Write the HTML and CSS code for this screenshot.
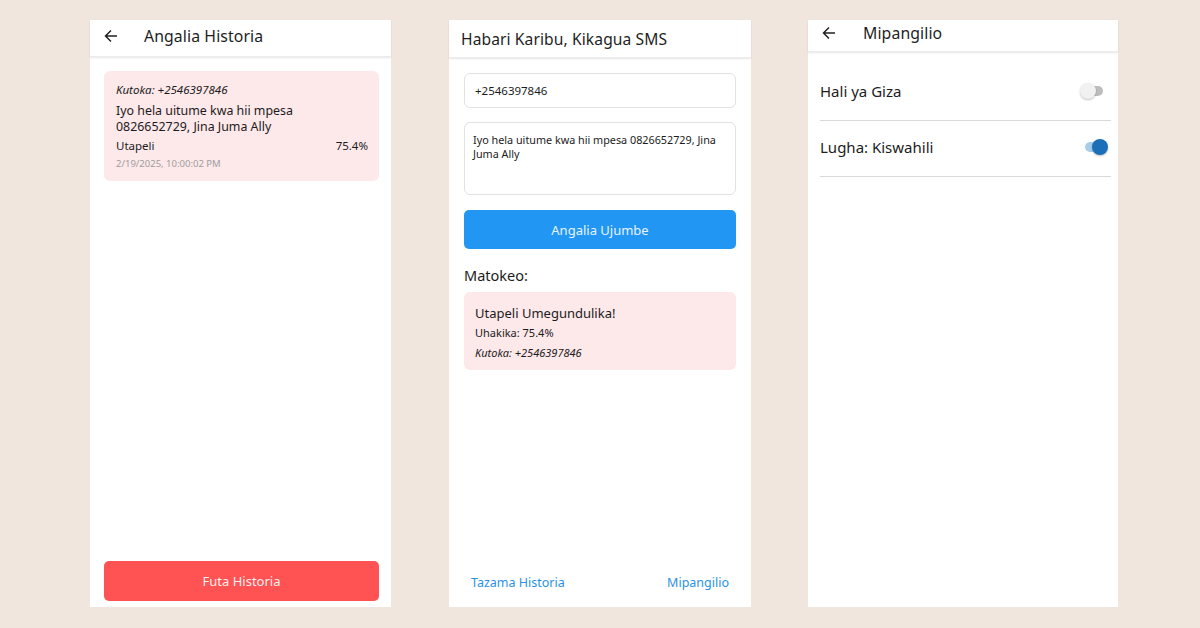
FILE: index.html
```html
<!DOCTYPE html>
<html lang="sw">
<head>
<meta charset="utf-8">
<link rel="stylesheet" href="styles.css">
</head>
<body>
<div class="stage">
  <section class="screen screen-history">
    <header class="bar bar-history">
      <svg class="back" width="14" height="14" viewBox="0 0 14 14"><path d="M13 7H1.8M7 1.5L1.5 7 7 12.5" fill="none" stroke="#222" stroke-width="1.5"/></svg>
      <h1 class="bar-title">Angalia Historia</h1>
    </header>
    <div class="history-body">
      <div class="card">
        <div class="from">Kutoka: +2546397846</div>
        <div class="msg">Iyo hela uitume kwa hii mpesa 0826652729, Jina Juma Ally</div>
        <div class="meta"><span>Utapeli</span><span>75.4%</span></div>
        <div class="date">2/19/2025, 10:00:02 PM</div>
      </div>
      <button class="btn btn-red">Futa Historia</button>
    </div>
  </section>

  <section class="screen screen-main">
    <header class="bar bar-main">
      <h1 class="bar-title main-title">Habari Karibu, Kikagua SMS</h1>
    </header>
    <div class="main-body">
      <div class="field field-input">+2546397846</div>
      <div class="field field-area">Iyo hela uitume kwa hii mpesa 0826652729, Jina Juma Ally</div>
      <button class="btn btn-blue">Angalia Ujumbe</button>
      <div class="result-label">Matokeo:</div>
      <div class="result">
        <div class="result-title">Utapeli Umegundulika!</div>
        <div class="result-line">Uhakika: 75.4%</div>
        <div class="result-line result-from">Kutoka: +2546397846</div>
      </div>
      <nav class="links"><span>Tazama Historia</span><span>Mipangilio</span></nav>
    </div>
  </section>

  <section class="screen screen-settings">
    <header class="bar bar-settings">
      <svg class="back" width="14" height="14" viewBox="0 0 14 14"><path d="M13 7H1.8M7 1.5L1.5 7 7 12.5" fill="none" stroke="#222" stroke-width="1.5"/></svg>
      <h1 class="bar-title">Mipangilio</h1>
    </header>
    <div class="settings-body">
      <div class="row">
        <span>Hali ya Giza</span>
        <span class="switch switch-off"><span class="track"></span><span class="thumb"></span></span>
      </div>
      <div class="row">
        <span>Lugha: Kiswahili</span>
        <span class="switch switch-on"><span class="track"></span><span class="thumb"></span></span>
      </div>
    </div>
  </section>
</div>
</body>
</html>
```

FILE: styles.css
```css
* { box-sizing: border-box; margin: 0; padding: 0; }
html, body { width: 1200px; height: 628px; overflow: hidden; }
body {
  background: #f0e6de;
  font-family: "Noto Sans", "Open Sans", sans-serif;
  color: #1c1c1c;
}
.stage {
  display: flex;
  padding: 20px 0 0 90px;
  gap: 57px;
  height: 607px;
}
.screen {
  background: #fff;
  height: 587px;
  display: flex;
  flex-direction: column;
}
.screen-history { width: 301px; }
.screen-main { width: 302px; margin-left: 1px; }
.screen-settings { width: 310px; }

.bar {
  display: flex;
  align-items: center;
  box-shadow: 0 1px 2px rgba(0,0,0,0.10);
  border-bottom: 1px solid #ececec;
  flex-shrink: 0;
}
.bar-history { height: 37px; padding-left: 14px; padding-bottom: 4px; }
.bar-main { height: 38px; padding-left: 12px; }
.bar-settings { height: 32px; padding-left: 14px; padding-bottom: 6px; }
.back { display: block; margin-right: 26px; }
.bar-settings .back { margin-right: 27px; }
.bar-title { font-size: 15.8px; font-weight: 400; letter-spacing: 0.1px; color: #1e1e1e; line-height: 20px; }
.main-title { font-size: 15.6px; }

.history-body {
  flex: 1;
  display: flex;
  flex-direction: column;
  justify-content: space-between;
  padding: 14px 12px 6px 14px;
}
.card {
  background: #fde8ea;
  border-radius: 6px;
  padding: 11px 11px 10px 12px;
  height: 110px;
}
.from { font-size: 11.5px; font-style: italic; line-height: 15px; margin-bottom: 6px; }
.msg { font-size: 12.4px; line-height: 16px; }
.meta { display: flex; justify-content: space-between; font-size: 11.5px; line-height: 15px; margin-top: 3px; }
.date { font-size: 9.5px; color: #9e9e9e; line-height: 14px; margin-top: 4px; }

.btn {
  border: none;
  font-family: inherit;
  color: #fff;
  border-radius: 5px;
  display: flex;
  align-items: center;
  justify-content: center;
}
.btn-red { background: #ff5252; height: 40px; font-size: 13px; color: #fdeeee; }
.btn-blue { background: #2196f3; height: 39px; font-size: 13px; color: #e8f3fd; margin-top: 15px; }

.main-body {
  flex: 1;
  display: flex;
  flex-direction: column;
  padding: 15px 15px 15px 15px;
}
.field {
  border: 1px solid #e2e2e2;
  border-radius: 6px;
  font-size: 11.5px;
  color: #1c1c1c;
}
.field-input { height: 35px; padding: 9px 10px; line-height: 15px; }
.field-area { height: 73px; margin-top: 14px; padding: 10px 8px; line-height: 14px; font-size: 10.8px; }
.result-label { font-size: 14.5px; margin-top: 16px; line-height: 20px; }
.result {
  margin-top: 7px;
  background: #fde8ea;
  border-radius: 6px;
  height: 78px;
  padding: 11px 11px;
}
.result-title { font-size: 13px; line-height: 20px; }
.result-line { font-size: 11px; line-height: 19.5px; }
.result-from { font-style: italic; }
.links {
  margin-top: auto;
  display: flex;
  justify-content: space-between;
  padding: 0 7px;
  font-size: 12.5px;
  color: #2a92e6;
  line-height: 18px;
}

.settings-body { padding: 13px 7px 0 12px; }
.row {
  display: flex;
  align-items: center;
  justify-content: space-between;
  height: 56px;
  border-bottom: 1px solid #d9d9d9;
  font-size: 15px;
  padding-right: 5px;
  padding-bottom: 3px;
}
.row + .row { padding-right: 3px; }
.switch { position: relative; width: 26px; height: 18px; display: block; }
.track {
  position: absolute; left: 3px; top: 4px; width: 20px; height: 10px; border-radius: 5px;
}
.thumb {
  position: absolute; top: 1px; width: 16px; height: 16px; border-radius: 50%;
  box-shadow: 0 1px 2px rgba(0,0,0,0.25);
}
.switch-off .track { background: #bdbdbd; }
.switch-off .thumb { left: 0; background: #f1f1f1; }
.switch-on .track { background: #a6cdec; }
.switch-on .thumb { left: 10px; background: #1b6fb8; }
```
